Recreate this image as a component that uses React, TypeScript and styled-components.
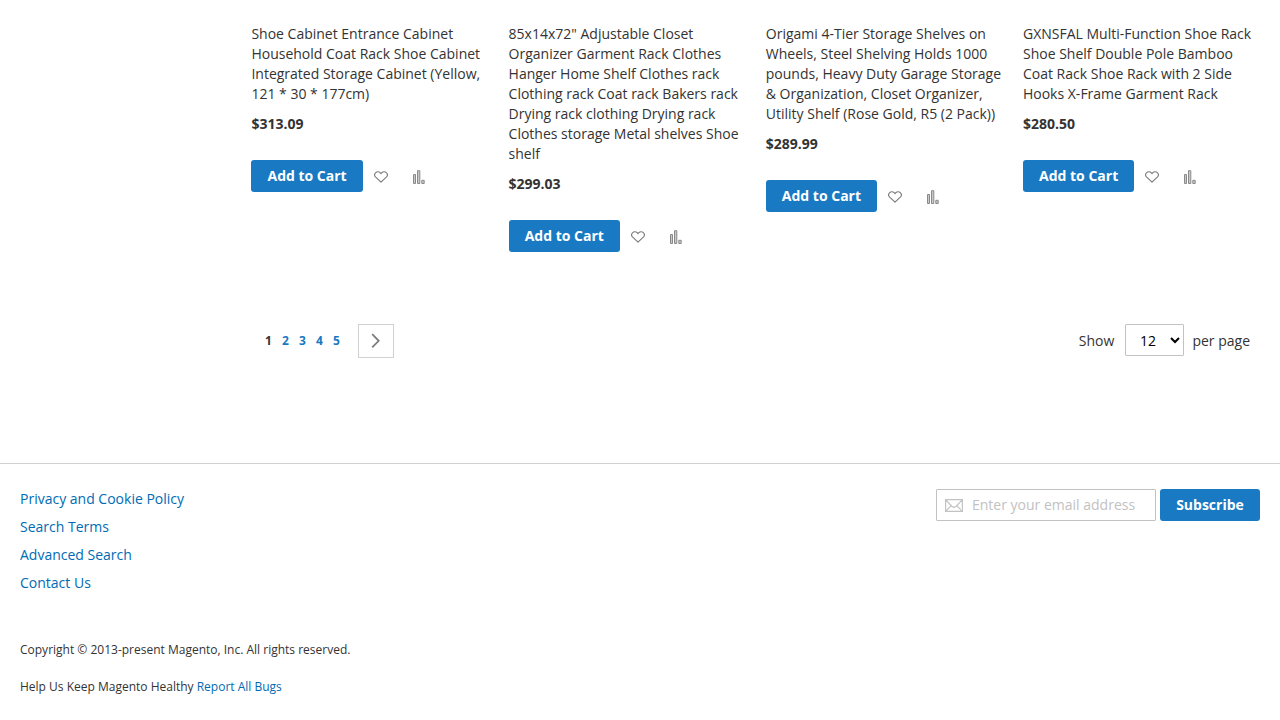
import React from 'react';
import styled, { createGlobalStyle } from 'styled-components';

const GlobalStyle = createGlobalStyle`
  *, *::before, *::after { box-sizing: border-box; }
  body {
    margin: 0;
    background: #fff;
    color: #333;
    font: 400 14px/20px "Open Sans", "Helvetica Neue", Helvetica, Arial, sans-serif;
  }
`;

const Page = styled.div`
  display: flex;
  flex-direction: column;
  height: 720px;
  overflow: hidden;
`;

const Main = styled.main`
  height: 463px;
  padding: 24px 0 0 251.4px;
`;

const ProductGrid = styled.ol`
  display: grid;
  grid-template-columns: repeat(4, 236.6px);
  column-gap: 20.6px;
  height: 300px;
  margin: 0;
  padding: 0;
  list-style: none;
`;

const ProductName = styled.a`
  display: block;
  margin-bottom: 10px;
`;

const Price = styled.div`
  font-weight: 700;
`;

const Actions = styled.div`
  display: flex;
  align-items: center;
  margin-top: 26px;
`;

const PrimaryButton = styled.button<{ $width: number }>`
  width: ${(p) => p.$width}px;
  height: 32px;
  padding: 0;
  border: 0;
  border-radius: 3px;
  background: #1979c3;
  color: #fff;
  font: 700 14px/16px "Open Sans", sans-serif;
`;

const HeartIcon = styled.svg`
  display: block;
  width: 14px;
  height: 12px;
  margin: 2px 0 0 11px;
`;

const CompareIcon = styled.svg`
  display: block;
  width: 13px;
  height: 15px;
  margin: 3px 0 0 24.8px;
`;

const Toolbar = styled.div`
  display: flex;
  justify-content: space-between;
  padding-right: 30px;
`;

const Pager = styled.nav`
  display: flex;
  align-items: center;
  height: 34px;
  padding-left: 13.6px;
  font-size: 12px;
  font-weight: 700;
`;

const PageNumber = styled.a<{ $current?: boolean }>`
  width: 17px;
  color: ${(p) => (p.$current ? '#333' : '#1979c3')};
`;

const NextButton = styled.button`
  display: flex;
  align-items: center;
  justify-content: center;
  width: 36px;
  height: 34px;
  margin-left: 8px;
  padding: 0;
  border: 1px solid #d1d1d1;
  background: #fff;
`;

const Limiter = styled.label`
  display: flex;
  align-items: center;
  height: 34px;
`;

const LimiterSelect = styled.select`
  width: 59px;
  height: 32px;
  margin: 0 8px 2px 11px;
  padding: 5px 10px 4px 9.5px;
  border: 1px solid #c2c2c2;
  border-radius: 1px;
  background: #fff;
  color: #000;
  font: 400 14px/20px "Open Sans", sans-serif;
`;

const Footer = styled.footer`
  flex: 1;
  padding: 25px 20px 0;
  border-top: 1px solid #d1d1d1;
`;

const FooterTop = styled.div`
  display: flex;
  justify-content: space-between;
  height: 152px;
`;

const FooterLinks = styled.ul`
  margin: 0;
  padding: 0;
  list-style: none;
`;

const FooterItem = styled.li`
  margin-bottom: 8px;
`;

const Link = styled.a`
  color: #006bb4;
`;

const Newsletter = styled.form`
  display: flex;
  gap: 4px;
`;

const EmailField = styled.div`
  display: flex;
  align-items: center;
  width: 220px;
  height: 32px;
  padding-left: 8px;
  border: 1px solid #c2c2c2;
  border-radius: 1px;
`;

const EmailInput = styled.input`
  width: 180px;
  margin-left: 9px;
  padding: 0;
  border: 0;
  outline: 0;
  font: 400 14px/20px "Open Sans", sans-serif;
  &::placeholder { color: #c2c2c2; }
`;

const Small = styled.div`
  margin-bottom: 20px;
  font-size: 12px;
  line-height: 17px;
`;

const products = [
  {
    name: 'Shoe Cabinet Entrance Cabinet Household Coat Rack Shoe Cabinet Integrated Storage Cabinet (Yellow, 121 * 30 * 177cm)',
    price: '$313.09',
  },
  {
    name: '85x14x72" Adjustable Closet Organizer Garment Rack Clothes Hanger Home Shelf Clothes rack Clothing rack Coat rack Bakers rack Drying rack clothing Drying rack Clothes storage Metal shelves Shoe shelf',
    price: '$299.03',
  },
  {
    name: 'Origami 4-Tier Storage Shelves on Wheels, Steel Shelving Holds 1000 pounds, Heavy Duty Garage Storage & Organization, Closet Organizer, Utility Shelf (Rose Gold, R5 (2 Pack))',
    price: '$289.99',
  },
  {
    name: 'GXNSFAL Multi-Function Shoe Rack Shoe Shelf Double Pole Bamboo Coat Rack Shoe Rack with 2 Side Hooks X-Frame Garment Rack',
    price: '$280.50',
  },
];

const links = ['Privacy and Cookie Policy', 'Search Terms', 'Advanced Search', 'Contact Us'];

export default function App() {
  return (
    <Page>
      <GlobalStyle />
      <Main>
        <ProductGrid>
          {products.map((p) => (
            <li key={p.price}>
              <ProductName>{p.name}</ProductName>
              <Price>{p.price}</Price>
              <Actions>
                <PrimaryButton $width={111.4}>Add to Cart</PrimaryButton>
                <HeartIcon viewBox="0 0 14 12" fill="none" stroke="#7d7d7d" strokeWidth="1.15" strokeLinejoin="round">
                  <path d="M7 11.2 1.7 6.2C.5 5 .4 3 1.5 1.8 2.8.5 4.9.4 6.1 1.7L7 2.7l.9-1C9.1.4 11.2.5 12.5 1.8c1.1 1.2 1 3.2-.2 4.4z" />
                </HeartIcon>
                <CompareIcon viewBox="0 0 13 15" fill="#c8c8c8" stroke="#8a8a8a">
                  <path d="M.5 4.5h2v9h-2zM4.5.7h2.3v12.8H4.5zM8.8 10.3h2.4v3.2H8.8z" />
                </CompareIcon>
              </Actions>
            </li>
          ))}
        </ProductGrid>
        <Toolbar>
          <Pager>
            {[1, 2, 3, 4, 5].map((n) => (
              <PageNumber key={n} $current={n === 1}>{n}</PageNumber>
            ))}
            <NextButton aria-label="Next">
              <svg width="10" height="16" viewBox="0 0 10 16" fill="none" stroke="#7d7d7d" strokeWidth="1.8">
                <path d="m1.2 1.2 6.5 6.6-6.5 6.6" />
              </svg>
            </NextButton>
          </Pager>
          <Limiter>
            Show
            <LimiterSelect defaultValue="12">
              <option>12</option>
              <option>24</option>
              <option>36</option>
            </LimiterSelect>
            per page
          </Limiter>
        </Toolbar>
      </Main>
      <Footer>
        <FooterTop>
          <FooterLinks>
            {links.map((l) => (
              <FooterItem key={l}><Link>{l}</Link></FooterItem>
            ))}
          </FooterLinks>
          <Newsletter>
            <EmailField>
              <svg width="18" height="13" viewBox="0 0 18 13" fill="none" stroke="#c2c2c2" strokeWidth="1.2">
                <path d="M.6.6h16.8v11.8H.6zM.8.8 6.8 7.2 9 8.6l2.2-1.4L17.2.8M.8 12.2l5.4-5.5M17.2 12.2l-5.4-5.5" />
              </svg>
              <EmailInput placeholder="Enter your email address" />
            </EmailField>
            <PrimaryButton $width={100} type="button">Subscribe</PrimaryButton>
          </Newsletter>
        </FooterTop>
        <Small>Copyright © 2013-present Magento, Inc. All rights reserved.</Small>
        <Small>Help Us Keep Magento Healthy <Link>Report All Bugs</Link></Small>
      </Footer>
    </Page>
  );
}
